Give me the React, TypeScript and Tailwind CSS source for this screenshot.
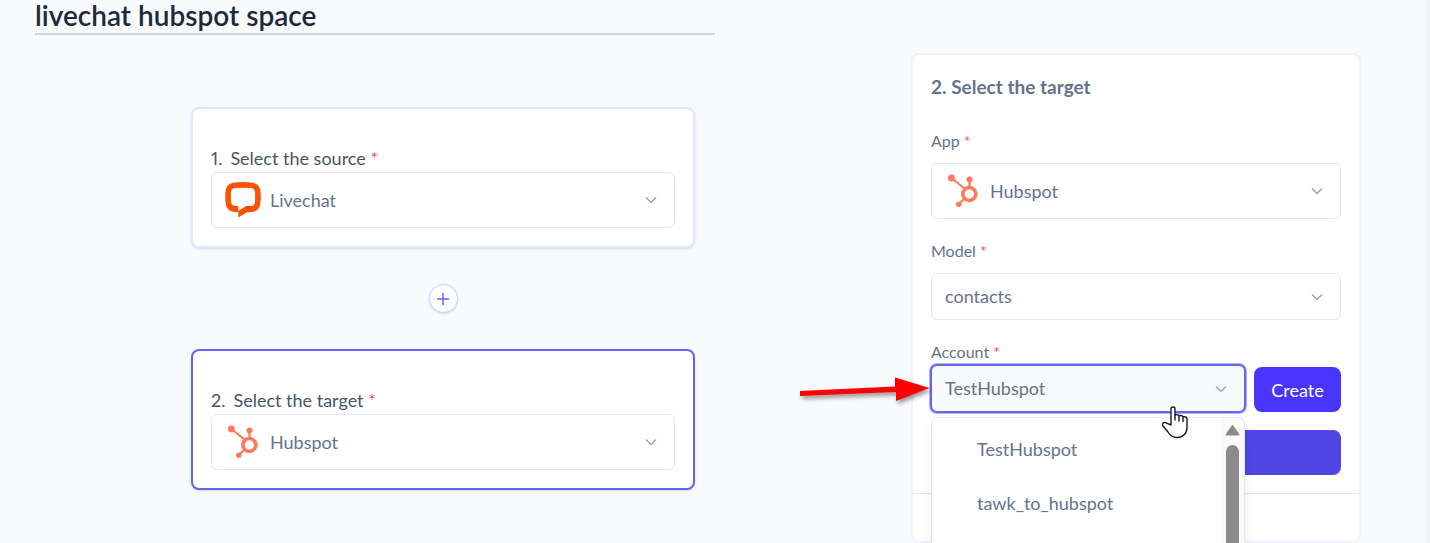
import { useState } from 'react'
import type { ReactNode } from 'react'

const LivechatLogo = () => (
  <svg viewBox="0 0 36 36" className="h-9 w-9" aria-hidden="true">
    <path
      fill="#ff5100"
      fillRule="evenodd"
      d="M10 .4Q18-.4 26 .4C32 1 35 4 35.5 9.500Q36 15 35.500 20.500C35 26 32 29.500 26.500 30H22.500L13.300 35.600V30H10C4 29.500 1 26.500.500 20.500Q0 15 .500 9.500C1 4 4 1 10 .4ZM10.500 6C7.500 6.200 6.200 7.500 6 10.500Q5.700 15 6 19.500C6.200 22.800 7.800 24 10.500 24H13.300V29L21 24H26C28.700 23.800 29.800 22.500 30 19.500Q30.300 15 30 10.500C29.800 7.500 28.500 6.200 25.500 6Q18 5.700 10.500 6Z"
    />
  </svg>
)

const HubspotLogo = () => (
  <svg viewBox="0 0 36 36" className="h-9 w-9" aria-hidden="true">
    <g stroke="#ff7a59" fill="none">
      <path strokeWidth="2.200" d="M6.500 5l13 10.500M24.500 7v8M14 31l5.500-5.500" />
      <circle cx="24.300" cy="21" r="6.500" strokeWidth="3.600" />
    </g>
    <g fill="#ff7a59">
      <circle cx="6.400" cy="5" r="3.400" />
      <circle cx="24.500" cy="6.400" r="3" />
      <circle cx="13.700" cy="31.300" r="2.700" />
    </g>
  </svg>
)

const Chevron = () => (
  <svg
    viewBox="0 0 12 12"
    className="pointer-events-none absolute right-[18px] top-1/2 h-3 w-3 -translate-y-1/2"
    fill="none"
    stroke="#9ca3af"
    strokeWidth="1.500"
    aria-hidden="true"
  >
    <path d="M1 3.500l5 5 5-5" />
  </svg>
)

const SelectField = ({
  id,
  value,
  logo,
  focused = false,
}: {
  id: string
  value: string
  logo?: ReactNode
  focused?: boolean
}) => (
  <div className="relative w-full">
    <select
      id={id}
      defaultValue={value}
      className={`block w-full cursor-pointer appearance-none rounded-md border pr-10 text-lg text-[#64748b] outline-none ${
        logo ? 'h-14 pl-[58px]' : 'h-[47px] pb-0.5 pl-[13px]'
      } ${
        focused
          ? 'border-[#6366f1] bg-[#f9fafc] shadow-[0_0_0_1px_#6366f1,0_0_0_2px_#b3b4f8]'
          : 'border-gray-200 bg-white'
      }`}
    >
      <option>{value}</option>
    </select>
    {/* logo sits over the select */}
    {logo && (
      <span className="pointer-events-none absolute left-[14px] top-[10px]">
        {logo}
      </span>
    )}
    <Chevron />
  </div>
)

const StepCard = ({
  step,
  title,
  app,
  logo,
  active = false,
}: {
  step: number
  title: string
  app: string
  logo: ReactNode
  active?: boolean
}) => (
  <div
    className={`w-full max-w-[504px] rounded-lg border-2 bg-white px-[18px] pb-[18px] pt-9 shadow-sm ${
      active ? 'border-[#6366f1]' : 'border-[#e0e7ff]'
    }`}
  >
    <label
      htmlFor={`step-${step}`}
      className="block text-lg leading-[27px] proportional-nums text-[#475569]"
    >
      <span className="mr-2">{step}.</span>
      {title} <span className="text-[#f05252]">*</span>
    </label>
    <SelectField id={`step-${step}`} value={app} logo={logo} />
  </div>
)

const FieldLabel = ({ id, children }: { id: string; children: string }) => (
  <label htmlFor={id} className="block text-base leading-6 text-[#64748b]">
    {children} <span className="text-[#f05252]">*</span>
  </label>
)

const AccountMenu = () => (
  <div className="absolute inset-x-0 top-full z-10 mt-[5px] flex h-60 rounded-md border border-gray-200 bg-white shadow-lg">
    <ul className="flex-1 pt-1">
      {['TestHubspot', 'tawk_to_hubspot'].map((account) => (
        <li key={account}>
          <button
            type="button"
            className="h-[54px] w-full pl-[45px] text-left text-lg text-[#64748b]"
          >
            {account}
          </button>
        </li>
      ))}
    </ul>
    {/* scrollbar */}
    <div className="flex w-[23px] flex-col items-center rounded-tr-md bg-[#fafafa] pt-[6px]">
      <svg viewBox="0 0 15 12" className="h-3 w-[15px]" aria-hidden="true">
        <path
          d="M7.500 2L13.500 10.500H1.500Z"
          fill="#8b8b8b"
          stroke="#8b8b8b"
          strokeWidth="1.800"
          strokeLinejoin="round"
        />
      </svg>
      <div className="mt-[9px] w-[13px] flex-1 rounded-t-full bg-[#8b8b8b]" />
    </div>
  </div>
)

const PointerArrow = () => (
  <svg
    viewBox="0 0 134 34"
    className="pointer-events-none absolute right-full top-[10px] z-20 h-[34px] w-[134px] drop-shadow-[2px_3px_2px_rgba(0,0,0,0.4)]"
    aria-hidden="true"
  >
    <path fill="#ff0000" d="M3 16L98 11.500V2.500L132.500 13L99 26V17L3 21Z" />
  </svg>
)

const HandCursor = () => (
  <svg
    viewBox="0 0 28 33"
    className="pointer-events-none absolute left-[230px] top-[41px] z-20 h-[33px] w-7"
    fill="#ffffff"
    stroke="#1a1a2e"
    strokeWidth="1.400"
    strokeLinejoin="round"
    strokeLinecap="round"
    aria-hidden="true"
  >
    <path d="M10 19V3a2 2 0 0 1 4 0v6q3.500-1 4 .8 3.400-.8 4 1 3.500-.6 4 1.700v9c0 6-4 10-10 10-4 0-7-2-9-5.500L1.700 19.500c-.8-2 .8-3.500 2.800-2.800L10 19Z" />
    <path d="M14 9v5M18 9.800V15M22 10.800V15.500" fill="none" />
  </svg>
)

export default function App() {
  const [spaceName, setSpaceName] = useState('livechat hubspot space')

  return (
    <div className="flex min-h-screen overflow-hidden border-r-4 border-[#f1f4fb] bg-[#f9fafc] font-['Lato',sans-serif]">
      <main className="mr-[25px] flex-1">
        <div className="pl-[35px]">
          <input
            aria-label="Space name"
            value={spaceName}
            onChange={(e) => setSpaceName(e.target.value)}
            className="block h-[35px] w-full max-w-[680px] border-b-2 border-gray-300 bg-transparent pb-1 text-[28px] font-semibold leading-8 text-slate-800 outline-none"
          />
        </div>
        <div className="mt-[72px] flex flex-col items-center">
          <StepCard
            step={1}
            title="Select the source"
            app="Livechat"
            logo={<LivechatLogo />}
          />
          <button
            type="button"
            aria-label="Add step"
            className="my-9 flex h-[29px] w-[29px] items-center justify-center rounded-full border border-[#c7d2fe] bg-white shadow-sm"
          >
            <svg viewBox="0 0 12 12" className="h-3 w-3" aria-hidden="true">
              <path d="M6 0v12M0 6h12" stroke="#6366f1" strokeWidth="1.500" />
            </svg>
          </button>
          <StepCard
            step={2}
            title="Select the target"
            app="Hubspot"
            logo={<HubspotLogo />}
            active
          />
        </div>
      </main>

      <aside className="mr-[65px] mt-[53px] w-[450px] self-start rounded-lg border-2 border-[#eef1ff] bg-white">
        <div className="px-[18px] pb-[18px] pt-[18px]">
          <h2 className="text-[19px] font-bold leading-7 text-[#64748b]">
            2. Select the target
          </h2>
          <div className="mt-7 space-y-[10px]">
            <FieldLabel id="app">App</FieldLabel>
            <SelectField id="app" value="Hubspot" logo={<HubspotLogo />} />
          </div>
          <div className="mt-5 space-y-[10px]">
            <FieldLabel id="model">Model</FieldLabel>
            <SelectField id="model" value="contacts" />
          </div>
          <div className="mt-5 space-y-px">
            <FieldLabel id="account">Account</FieldLabel>
            <div className="flex items-end gap-[9px]">
              <div className="relative flex-1">
                <SelectField id="account" value="TestHubspot" focused />
                <AccountMenu />
                <PointerArrow />
                <HandCursor />
              </div>
              <button
                type="button"
                className="h-[45px] w-[87px] rounded-lg bg-[#4a35ff] text-lg text-white"
              >
                Create
              </button>
            </div>
          </div>
          <button
            type="button"
            aria-label="Continue"
            className="mt-[18px] block h-[45px] w-full rounded-lg bg-[#4f46e5]"
          />
        </div>
        <div className="h-12 border-t border-gray-200" />
      </aside>
    </div>
  )
}
